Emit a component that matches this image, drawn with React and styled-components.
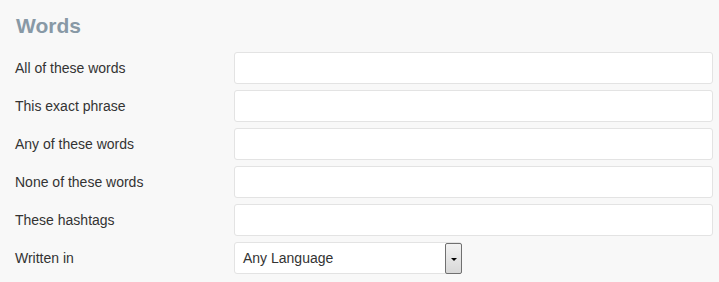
import React from "react";
import styled, { createGlobalStyle } from "styled-components";

const Global = createGlobalStyle`
  html, body { margin: 0; padding: 0; background: #f8f8f8; }
  body { font-family: "Liberation Sans", Arial, sans-serif; }
`;

const Panel = styled.div`
  width: 719px;
  height: 282px;
  box-sizing: border-box;
  padding: 14px 6px 0 15px;
  background: #f8f8f8;
  overflow: hidden;
`;

const Title = styled.h2`
  margin: 0 0 14px 1px;
  font-size: 21px;
  line-height: 24px;
  font-weight: bold;
  color: #8899a6;
`;

const Form = styled.div`
  display: grid;
  grid-template-columns: 219px 479px;
  grid-auto-rows: 32px;
  row-gap: 6px;
  align-items: center;
`;

const Label = styled.label`
  font-size: 14px;
  line-height: 20px;
  color: #333;
`;

const Input = styled.input`
  box-sizing: border-box;
  width: 100%;
  height: 32px;
  margin: 0;
  border: 1px solid #e3e3e3;
  border-radius: 3px;
  background: #fff;
  padding: 0 8px;
  font: 14px "Liberation Sans", Arial, sans-serif;
  outline: none;
`;

const Select = styled.div`
  box-sizing: border-box;
  position: relative;
  width: 228px;
  height: 32px;
  border: 1px solid #e3e3e3;
  border-radius: 3px;
  background: #fff;
  display: flex;
  align-items: center;
  padding-left: 8px;
  font-size: 14px;
  color: #333;
`;

const DropButton = styled.div`
  position: absolute;
  right: -1px;
  top: 0;
  bottom: -1px;
  width: 15px;
  border: 1px solid #707070;
  border-radius: 2px;
  background: linear-gradient(#f2f2f2, #d8d8d8);
  display: flex;
  align-items: center;
  justify-content: center;
`;

const Arrow = styled.span`
  width: 0;
  height: 0;
  border-left: 3px solid transparent;
  border-right: 3px solid transparent;
  border-top: 3px solid #000;
  margin-top: 1px;
`;

const fields = [
  "All of these words",
  "This exact phrase",
  "Any of these words",
  "None of these words",
  "These hashtags",
];

export default function App() {
  return (
    <>
      <Global />
      <Panel>
        <Title>Words</Title>
        <Form>
          {fields.map((f) => (
            <React.Fragment key={f}>
              <Label>{f}</Label>
              <Input type="text" />
            </React.Fragment>
          ))}
          <Label>Written in</Label>
          <Select>
            Any Language
            <DropButton>
              <Arrow />
            </DropButton>
          </Select>
        </Form>
      </Panel>
    </>
  );
}
